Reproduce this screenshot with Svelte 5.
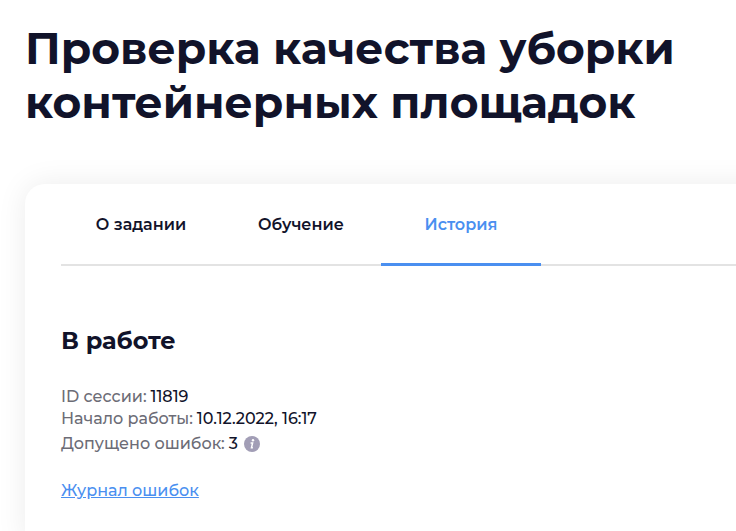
<script lang="ts">
	const title = "Проверка качества уборки контейнерных площадок";
	const tabs = ["О задании", "Обучение", "История"];
	let active = $state("История");

	const session = [
		{ label: "ID сессии:", value: "11819" },
		{ label: "Начало работы:", value: "10.12.2022, 16:17" },
		{ label: "Допущено ошибок:", value: "3", info: true }
	];
</script>

<main>
	<h1>{title}</h1>
	<div class="card">
		<div class="tabs" role="tablist">
			{#each tabs as tab}
				<button
					type="button"
					role="tab"
					class="tab"
					class:active={active === tab}
					aria-selected={active === tab}
					onclick={() => (active = tab)}
				>{tab}</button>
			{/each}
		</div>
		<section>
			<h2>В работе</h2>
			<dl>
				{#each session as row}
					<div class="row" class:with-info={row.info}>
						<dt>{row.label}</dt>
						<dd>{row.value}</dd>
						{#if row.info}
							<button type="button" class="info" aria-label="Подробнее">
								<svg viewBox="0 0 16 16" width="16" height="16">
									<circle cx="8" cy="8" r="8" fill="#a29eb6" />
									<circle cx="9" cy="4.2" r="1.2" fill="#fff" />
									<path d="M6.6 7h2L7.5 11.7h1.4" fill="none" stroke="#fff" stroke-width="1.5" />
								</svg>
							</button>
						{/if}
					</div>
				{/each}
			</dl>
			<a href="#errors">Журнал ошибок</a>
		</section>
	</div>
</main>

<style>
	:global(body) {
		margin: 0;
		background: #fff;
	}
	main {
		box-sizing: border-box;
		padding: 21px 0 0 25px;
		overflow: hidden;
		color: #11132a;
		font-family: Montserrat, "Open Sans", "Noto Sans", sans-serif;
	}
	h1 {
		max-width: 700px;
		margin: 0 0 55px;
		font-size: 44px;
		font-weight: 700;
		line-height: 54px;
	}
	/* runs past the right edge so its shadow doesn't fade there */
	.card {
		margin-right: -40px;
		padding: 0 0 40px 36px;
		border-radius: 20px 0 0 0;
		box-shadow: 0 0 30px rgba(0, 0, 0, 0.08);
	}
	.tabs {
		display: flex;
		border-bottom: 2px solid #e3e3e3;
	}
	.tab {
		width: 160px;
		height: 82px;
		margin-bottom: -2px;
		padding: 2px 0 0;
		border: 0;
		border-bottom: 3px solid transparent;
		background: none;
		color: inherit;
		font: 600 16px/20px Montserrat, "Open Sans", "Noto Sans", sans-serif;
		cursor: pointer;
	}
	.tab.active {
		border-color: #4a8ff0;
		color: #4a8ff0;
	}
	h2 {
		margin: 60px 0 30px;
		font-size: 24px;
		font-weight: 700;
		line-height: 30px;
	}
	dl {
		margin: 0 0 22px;
	}
	.row {
		display: flex;
		align-items: center;
		gap: 4px;
		font-size: 16px;
		font-weight: 500;
		line-height: 22px;
	}
	.with-info {
		line-height: 28px;
	}
	dt {
		color: #6c6c76;
	}
	dd {
		margin: 0;
	}
	.info {
		display: flex;
		margin-left: 2px;
		padding: 0;
		border: 0;
		background: none;
	}
	a {
		color: #4a8ff0;
		font-size: 16px;
		font-weight: 500;
		line-height: 22px;
	}
</style>
